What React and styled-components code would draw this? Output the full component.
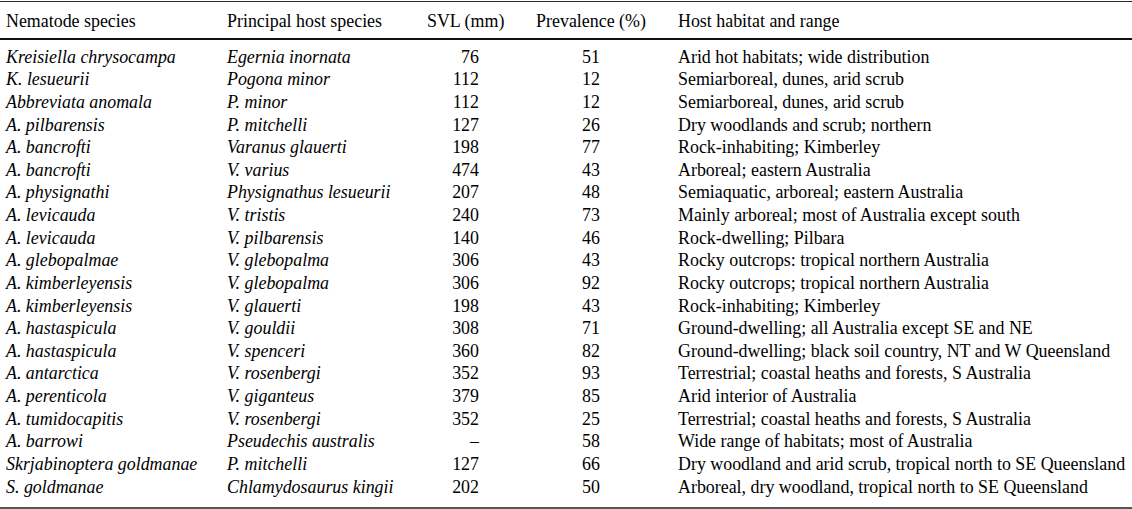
import styled, { createGlobalStyle } from "styled-components";

const GlobalStyle = createGlobalStyle`
  html, body {
    margin: 0;
    padding: 0;
    background: #ffffff;
  }
  body {
    font-family: "Liberation Serif", "Times New Roman", serif;
    color: #000;
  }
`;

const rows = [
  ["Kreisiella chrysocampa", "Egernia inornata", "76", "51", "Arid hot habitats; wide distribution"],
  ["K. lesueurii", "Pogona minor", "112", "12", "Semiarboreal, dunes, arid scrub"],
  ["Abbreviata anomala", "P. minor", "112", "12", "Semiarboreal, dunes, arid scrub"],
  ["A. pilbarensis", "P. mitchelli", "127", "26", "Dry woodlands and scrub; northern"],
  ["A. bancrofti", "Varanus glauerti", "198", "77", "Rock-inhabiting; Kimberley"],
  ["A. bancrofti", "V. varius", "474", "43", "Arboreal; eastern Australia"],
  ["A. physignathi", "Physignathus lesueurii", "207", "48", "Semiaquatic, arboreal; eastern Australia"],
  ["A. levicauda", "V. tristis", "240", "73", "Mainly arboreal; most of Australia except south"],
  ["A. levicauda", "V. pilbarensis", "140", "46", "Rock-dwelling; Pilbara"],
  ["A. glebopalmae", "V. glebopalma", "306", "43", "Rocky outcrops: tropical northern Australia"],
  ["A. kimberleyensis", "V. glebopalma", "306", "92", "Rocky outcrops; tropical northern Australia"],
  ["A. kimberleyensis", "V. glauerti", "198", "43", "Rock-inhabiting; Kimberley"],
  ["A. hastaspicula", "V. gouldii", "308", "71", "Ground-dwelling; all Australia except SE and NE"],
  ["A. hastaspicula", "V. spenceri", "360", "82", "Ground-dwelling; black soil country, NT and W Queensland"],
  ["A. antarctica", "V. rosenbergi", "352", "93", "Terrestrial; coastal heaths and forests, S Australia"],
  ["A. perenticola", "V. giganteus", "379", "85", "Arid interior of Australia"],
  ["A. tumidocapitis", "V. rosenbergi", "352", "25", "Terrestrial; coastal heaths and forests, S Australia"],
  ["A. barrowi", "Pseudechis australis", "–", "58", "Wide range of habitats; most of Australia"],
  ["Skrjabinoptera goldmanae", "P. mitchelli", "127", "66", "Dry woodland and arid scrub, tropical north to SE Queensland"],
  ["S. goldmanae", "Chlamydosaurus kingii", "202", "50", "Arboreal, dry woodland, tropical north to SE Queensland"],
];

export default function App() {
  return (
    <Page>
      <GlobalStyle />
      <Table>
        <colgroup>
          <col style={{ width: 221 }} />
          <col style={{ width: 200 }} />
          <col style={{ width: 99 }} />
          <col style={{ width: 142 }} />
          <col />
        </colgroup>
        <thead>
          <tr>
            <HeadCell>Nematode species</HeadCell>
            <HeadCell>Principal host species</HeadCell>
            <HeadCell>SVL (mm)</HeadCell>
            <HeadCell $align="center">Prevalence (%)</HeadCell>
            <HeadCell $wide>Host habitat and range</HeadCell>
          </tr>
        </thead>
        <tbody>
          {rows.map((r, i) => (
            <Row key={i}>
              <Cell $italic>{r[0]}</Cell>
              <Cell $italic>{r[1]}</Cell>
              <Cell $align="right">{r[2]}</Cell>
              <Cell $align="center">{r[3]}</Cell>
              <Cell $wide>{r[4]}</Cell>
            </Row>
          ))}
        </tbody>
      </Table>
    </Page>
  );
}

const Page = styled.div`
  width: 1132px;
  padding-top: 1px;
`;

const Table = styled.table`
  width: 1132px;
  table-layout: fixed;
  border-collapse: collapse;
  font-size: 17.9px;
  line-height: 22.63px;
  border-top: 1px solid #2a2a2a;
  border-bottom: 2px solid #555;
`;

const HeadCell = styled.th`
  font-weight: 400;
  text-align: ${(p) => p.$align || "left"};
  padding: 8px 0 5px ${(p) => (p.$align === "center" ? "0" : p.$wide ? "16px" : "6px")};
  border-bottom: 2px solid #111;
  white-space: nowrap;
`;

const Row = styled.tr`
  &:first-child td {
    padding-top: 6px;
  }
  &:last-child td {
    padding-bottom: 9px;
  }
`;

const Cell = styled.td`
  padding: 0;
  padding-left: ${(p) => (p.$wide ? "16px" : p.$align ? "0" : "6px")};
  padding-right: ${(p) => (p.$align === "right" ? "41px" : "0")};
  text-align: ${(p) => p.$align || "left"};
  font-style: ${(p) => (p.$italic ? "italic" : "normal")};
  white-space: nowrap;
`;
